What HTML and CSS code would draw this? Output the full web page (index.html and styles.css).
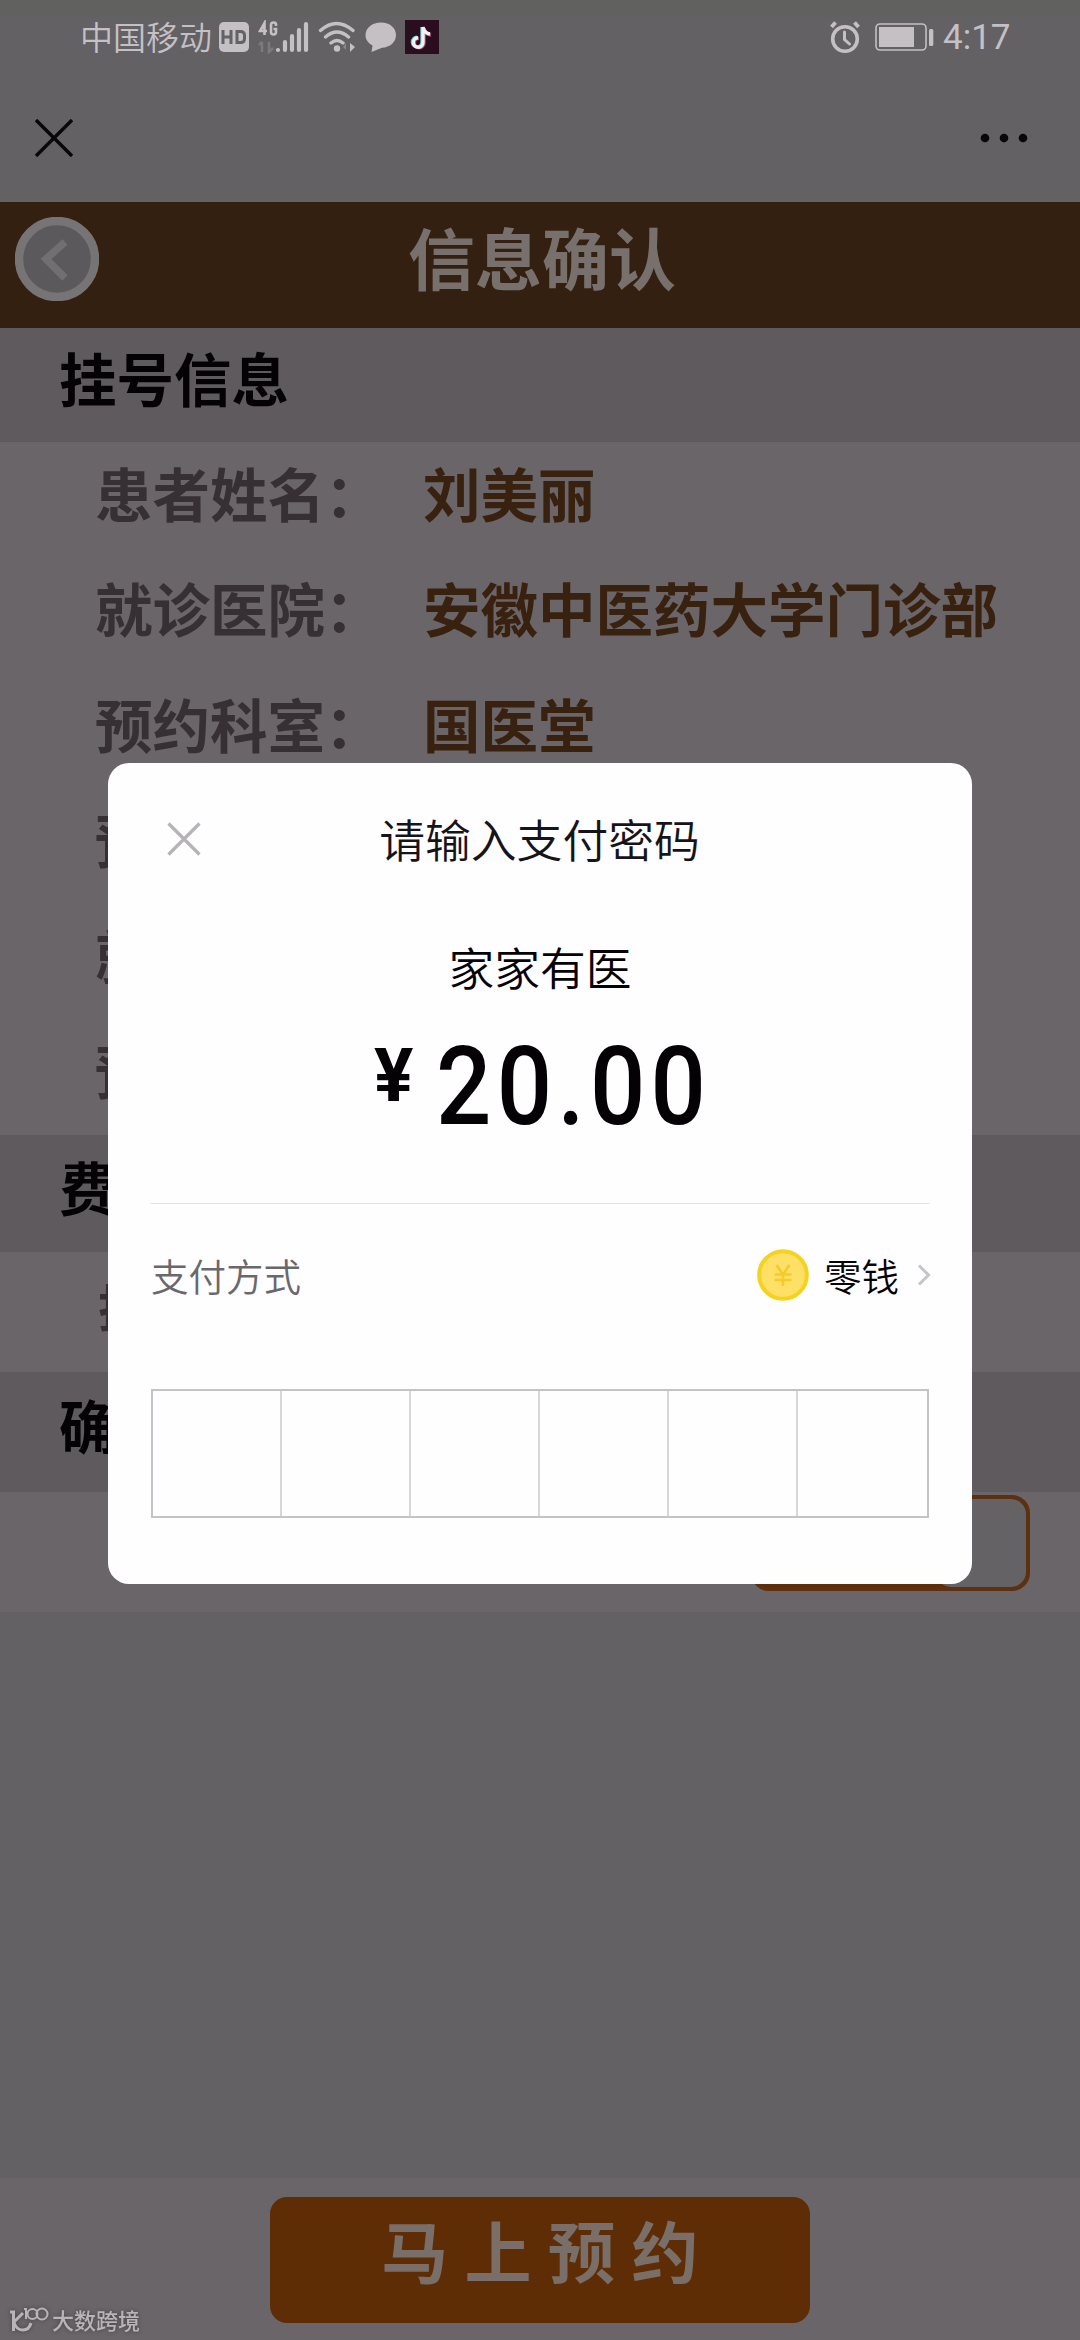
FILE: index.html
```html
<!DOCTYPE html>
<html lang="zh-CN">
<head>
<meta charset="utf-8">
<title>信息确认</title>
<link rel="stylesheet" href="styles.css">
</head>
<body>
<div class="screen">
  <header class="top">
    <div class="status">
      <div class="status-left">
        <span class="carrier">中国移动</span>
        <svg class="hd" width="30" height="30" viewBox="0 0 30 30"><rect width="30" height="30" rx="5" fill="#c4c0c4"/><g stroke="#656266" stroke-width="3" fill="none"><path d="M4 8v14M12 8v14M4 15h8M18 9.500v11h3.500q4 0 4-4v-3q0-4-4-4z"/></g></svg>
        <svg class="signal" width="52" height="34" viewBox="0 0 52 34"><g stroke="#c4c0c4" stroke-width="2.600" fill="none"><path d="M6.500 15V3L2 11h7M18 6V4.500q0-2-2.500-2t-2.500 2.500v7q0 2.500 2.500 2.500t2.500-2.500V9h-2.500"/></g><path d="M4 22v10M1 25l3-3M11 22v10l4-4" stroke="#7d797e" stroke-width="2.500" fill="none"/><g stroke="#c4c0c4" stroke-width="4.200" stroke-linecap="round"><path d="M20 30v0M27 22v8M34 16v14M41 10v20M48 4v26"/></g></svg>
        <svg class="wifi" width="38" height="32" viewBox="0 0 38 32"><g fill="none" stroke="#c4c0c4" stroke-width="3.400" stroke-linecap="round"><path d="M2.500 9.500q16-14 32.500 0M7.500 16q11.500-10 23 0M13 22q6-5 12 0"/></g><circle cx="19" cy="27.500" r="3.200" fill="#c4c0c4"/><path d="M32 22v9l5-5z" fill="#c4c0c4"/><path d="M28 22v7l-3-3z" fill="#8a868a"/></svg>
        <svg class="bubble" width="32" height="32" viewBox="0 0 32 32"><path d="M16 1.500c9 0 15 5.500 15 12.500s-6 12.500-14 12.700L6.500 31l1-6.500C3 22 .5 18.500.5 14 .5 7 7 1.500 16 1.500z" fill="#c4c0c4"/></svg>
        <svg class="note" width="34" height="34" viewBox="0 0 34 34"><rect width="34" height="34" fill="#2a0d1e"/><g fill="none" stroke-width="3.400"><path d="M17 7v15a4.800 4.800 0 1 1-5-4.800M17 7q1 6 7 7" stroke="#66cdd0"/><path d="M19 8v15a4.800 4.800 0 1 1-5-4.800M19 8q1 6 7 7" stroke="#b0506a"/><path d="M18 7v15.500a4.800 4.800 0 1 1-5-4.800M18 7q1 6 7 7" stroke="#f2f0f2"/></g></svg>
      </div>
      <div class="status-right">
        <svg width="32" height="34" viewBox="0 0 32 34"><g fill="none" stroke="#c4c0c4" stroke-linecap="round"><circle cx="16" cy="19" r="12.300" stroke-width="3.600"/><path d="M15.500 12v7.500l5 4.500" stroke-width="3"/><path d="M2.500 7l4-4.500M29.500 7l-4-4.500" stroke-width="3.800" stroke-linecap="butt"/></g></svg>
        <svg class="battery" width="60" height="28" viewBox="0 0 60 28"><rect x="1" y="1" width="50" height="26" rx="4" fill="none" stroke="#c4c0c4" stroke-width="1.600"/><rect x="4" y="4" width="35" height="20" fill="#c4c0c4"/><rect x="54" y="6" width="4.300" height="17" rx="1.500" fill="#c4c0c4"/></svg>
        <span class="time">4:17</span>
      </div>
    </div>
    <div class="nav">
      <svg width="38" height="38" viewBox="0 0 38 38"><path d="M1 1l36 36M37 1L1 37" stroke="#08060a" stroke-width="3.400"/></svg>
      <svg width="48" height="10" viewBox="0 0 48 10"><g fill="#08060a"><circle cx="5" cy="5" r="4.300"/><circle cx="24" cy="5" r="4.300"/><circle cx="43" cy="5" r="4.300"/></g></svg>
    </div>
  </header>
  <div class="titlebar">
    <svg class="back" width="84" height="84" viewBox="0 0 84 84"><circle cx="42" cy="42" r="38" fill="#5b595c" stroke="#777475" stroke-width="8.500"/><path d="M50 25L31 42l19 19" fill="none" stroke="#716f71" stroke-width="7.500"/></svg>
    <h1>信息确认</h1>
  </div>
  <h2 class="section">挂号信息</h2>
  <div class="rows">
    <div class="row"><span class="label">患者姓名：</span><span class="value">刘美丽</span></div>
    <div class="row"><span class="label">就诊医院：</span><span class="value">安徽中医药大学门诊部</span></div>
    <div class="row"><span class="label">预约科室：</span><span class="value">国医堂</span></div>
    <div class="row"><span class="label">预</span></div>
    <div class="row"><span class="label">就</span></div>
    <div class="row"><span class="label">预</span></div>
  </div>
  <h2 class="section tall fee">费</h2>
  <div class="row fee-row"><span class="label">挂</span></div>
  <h2 class="section tall">确</h2>
  <div class="toggle-row"><div class="toggle"><div class="knob"></div></div></div>
  <div class="blank"></div>
  <footer class="footer">
    <div class="submit">马上预约</div>
    <div class="mark">
      <svg width="40" height="28" viewBox="0 0 40 28"><g fill="none" stroke="#b9b4b7"><path d="M1 7h3.500v19M14 8L5 17q2 8 9 8 6 0 8-7" stroke-width="3"/><path d="M15 4h2v10" stroke-width="2"/><circle cx="23.500" cy="9" r="5" stroke-width="2"/><circle cx="33" cy="9" r="5.500" stroke-width="2"/></g></svg>
      <span>大数跨境</span>
    </div>
  </footer>

  <div class="modal">
    <div class="modal-head">
      <svg class="close" width="34" height="34" viewBox="0 0 34 34"><path d="M1.500 1.500l31 31M32.500 1.500l-31 31" stroke="#b5b3b6" stroke-width="3.200"/></svg>
      <div class="modal-title">请输入支付密码</div>
    </div>
    <div class="merchant">家家有医</div>
    <div class="amount"><span class="yen">¥</span><span class="digits">20.00</span></div>
    <div class="method">
      <span class="method-label">支付方式</span>
      <svg width="52" height="52" viewBox="0 0 52 52"><circle cx="26" cy="26" r="23.800" fill="#ffe066" stroke="#f5d21c" stroke-width="4"/><path d="M19.500 16l6.500 9.500L32.500 16M17.500 25.500h17M17.500 31h17M26 25.500V37" fill="none" stroke="#f2cb2c" stroke-width="2.600"/></svg>
      <span class="method-name">零钱</span>
      <svg class="chev" width="14" height="22" viewBox="0 0 14 22"><path d="M2 1.500L11.500 11 2 20.500" fill="none" stroke="#c6c4c8" stroke-width="3"/></svg>
    </div>
    <div class="pin"><i></i><i></i><i></i><i></i><i></i><i></i></div>
  </div>
</div>
</body>
</html>
```
FILE: styles.css
```css
* { box-sizing: border-box; }
body {
  margin: 0;
  background: #646165;
  font-family: "Noto Sans CJK SC", "Noto Sans", sans-serif;
}
h1, h2 { margin: 0; }
svg { display: block; flex: none; }
.screen {
  position: relative;
  width: 1080px;
  height: 2340px;
  display: flex;
  flex-direction: column;
  overflow: hidden;
}
.top {
  height: 202px;
  background: linear-gradient(#61615f 0, #61615f 16px, #636164 17px);
}
.status {
  height: 74px;
  display: flex;
  justify-content: space-between;
  align-items: center;
  padding: 0 72px 0 80px;
  color: #c4c0c4;
}
.status-left, .status-right { display: flex; align-items: center; }
.carrier {
  width: 139px;
  font-size: 33px;
  font-weight: 350;
  line-height: 40px;
  padding-bottom: 3px;
}
.signal { margin-left: 9px; }
.wifi { margin-left: 8px; }
.bubble { margin-left: 9px; }
.note { margin-left: 8px; }
.battery { margin: 0 8px 0 14px; }
.time {
  font-family: Roboto, sans-serif;
  font-size: 35px;
  width: 65px;
  white-space: nowrap;
}
.nav {
  height: 128px;
  display: flex;
  justify-content: space-between;
  align-items: center;
  padding: 0 52px 0 35px;
}
.titlebar {
  height: 126px;
  background: #342011;
  display: flex;
  align-items: center;
  padding: 0 15px 12px;
}
.titlebar h1 {
  flex: 1;
  padding-right: 80px;
  text-align: center;
  font-size: 67px;
  font-weight: 700;
  line-height: 100px;
  margin-bottom: 7px;
  color: #77706d;
}
.section {
  height: 114px;
  padding: 0 0 16px 59px;
  display: flex;
  align-items: center;
  background: #5e5a5e;
  color: #050206;
  font-size: 57.5px;
  font-weight: 700;
  line-height: 80px;
}
.section.tall { height: 120px; }
.section.fee { height: 117px; }
.rows { height: 693px; }
.row {
  height: 115.5px;
  padding: 0 0 16px 95px;
  display: flex;
  align-items: center;
  font-size: 57.5px;
  font-weight: 700;
  line-height: 80px;
}
.rows, .fee-row, .toggle-row, .footer { background: #696568; }
.label { width: 328px; color: #362f33; }
.value { color: #38220f; white-space: nowrap; }
.fee-row { height: 120px; padding: 0 0 14px 98px; font-size: 50px; }
.toggle-row {
  height: 120px;
  padding: 3px 50px 0 0;
  display: flex;
  justify-content: flex-end;
}
.toggle {
  width: 279px;
  height: 96px;
  border: 4px solid #5c3010;
  border-radius: 18px;
  background: #5f2d05;
  display: flex;
  justify-content: flex-end;
}
.knob { width: 90px; border-radius: 15px; background: #656265; }
.blank { flex: 1; }
.footer {
  position: relative;
  height: 162px;
  padding-top: 19px;
}
.submit {
  width: 540px;
  height: 126px;
  margin: 0 auto;
  padding: 0 0 22px 16px;
  border-radius: 17px;
  background: #5f2d05;
  color: #7a6f68;
  display: flex;
  align-items: center;
  justify-content: center;
  font-size: 67px;
  font-weight: 700;
  line-height: 80px;
  letter-spacing: 16.5px;
}
.mark {
  position: absolute;
  left: 9px;
  top: 126px;
  display: flex;
  align-items: center;
  gap: 3px;
  color: #b9b4b7;
  font-size: 22px;
  font-weight: 500;
  line-height: 30px;
  filter: drop-shadow(0 0 2px #444044);
}
.modal {
  position: absolute;
  left: 108px;
  top: 763px;
  width: 864px;
  height: 821px;
  padding: 0 43px;
  border-radius: 21px;
  background: #fefdff;
}
.modal-head {
  height: 152px;
  display: flex;
  align-items: center;
  padding-left: 16px;
}
.modal-title {
  flex: 1;
  padding: 0 51px 2px 0;
  text-align: center;
  font-size: 45.8px;
  font-weight: 350;
  color: #161417;
}
.merchant {
  height: 102px;
  line-height: 102px;
  text-align: center;
  font-size: 45.8px;
  font-weight: 350;
  color: #050306;
}
.amount {
  height: 186px;
  display: flex;
  align-items: flex-start;
  font-family: Roboto, sans-serif;
  font-weight: 500;
  color: #040205;
  white-space: nowrap;
}
.yen {
  width: 62px;
  margin: 14px 0 0 223px;
  font-size: 75px;
  font-weight: 700;
  line-height: 88px;
  transform: scaleX(.98);
  transform-origin: left;
}
.digits {
  margin-top: 6px;
  font-size: 109.5px;
  line-height: 128px;
  letter-spacing: 6px;
  transform: scaleX(.89);
  transform-origin: left;
}
.method {
  height: 186px;
  border-top: 1px solid #e2e0e3;
  padding-bottom: 43px;
  display: flex;
  align-items: center;
  font-size: 37.5px;
  font-weight: 350;
  line-height: 50px;
}
.method-label { flex: 1; color: #69686a; padding-bottom: 1px; }
.method-name { margin-left: 15px; padding-bottom: 1px; color: #050306; }
.chev { margin: 0 -2px 0 18px; }
.pin {
  width: 778px;
  height: 129px;
  border: 2px solid #c5c3c7;
  display: grid;
  grid-template-columns: repeat(5, 129px) 1fr;
}
.pin i { border-right: 2px solid #d8d6d9; }
.pin i:last-child { border-right: 0; }
```
